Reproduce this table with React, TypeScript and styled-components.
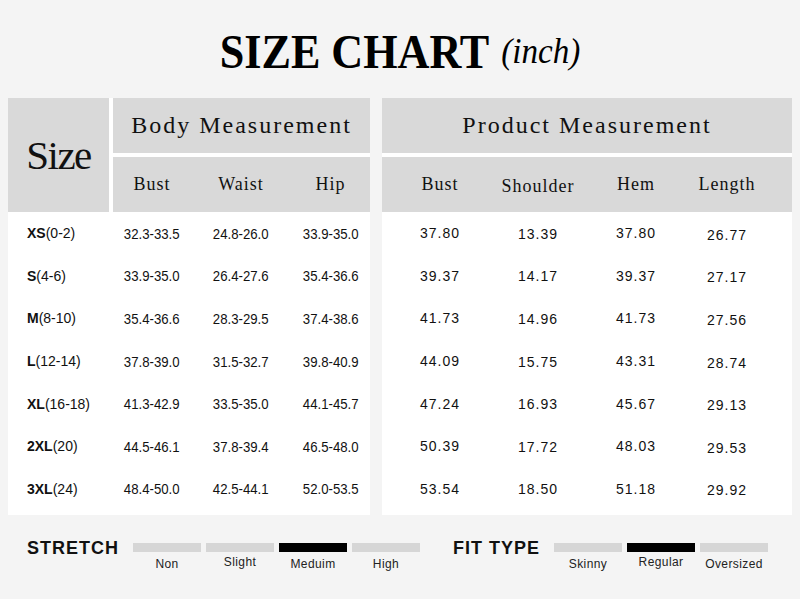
import styled, { createGlobalStyle } from "styled-components";

const GlobalStyle = createGlobalStyle`
  html, body {
    margin: 0;
    padding: 0;
    background: #f4f4f4;
  }
  body {
    width: 800px;
    height: 599px;
    overflow: hidden;
    font-family: "Liberation Sans", Arial, sans-serif;
    color: #111;
  }
`;

const Page = styled.div`
  width: 800px;
  height: 599px;
  background: #f4f4f4;
  display: flex;
  flex-direction: column;
`;

const TitleBar = styled.div`
  height: 98px;
  box-sizing: border-box;
  padding-top: 27px;
  text-align: center;
`;

const Title = styled.h1`
  display: inline-block;
  margin: 0;
  white-space: nowrap;
  font-family: "Liberation Serif", "Times New Roman", serif;
  font-weight: 700;
  font-size: 48px;
  line-height: 48px;
  color: #000;
  transform: scaleX(0.92);
`;

const Unit = styled.span`
  margin-left: 13px;
  font-weight: 400;
  font-style: italic;
  font-size: 36px;
  vertical-align: 5px;
`;

const Tables = styled.div`
  display: flex;
  gap: 12px;
  padding: 0 8px;
`;

const Panel = styled.div<{ $w: number }>`
  width: ${({ $w }) => $w}px;
  background: #fff;
  padding-bottom: 5px;
`;

const LeftHead = styled.div`
  display: grid;
  grid-template-columns: 101px 257px;
  grid-template-rows: 55px 55px;
  gap: 4px;
`;

const RightHead = styled.div`
  display: grid;
  grid-template-rows: 55px 55px;
  gap: 4px;
`;

const GrayCell = styled.div<{ $tall?: boolean }>`
  background: #d9d9d9;
  display: flex;
  align-items: center;
  justify-content: center;
  font-family: "Liberation Serif", "Times New Roman", serif;
  color: #111;
  grid-row: ${({ $tall }) => ($tall ? "1 / 3" : "auto")};
`;

const SizeWord = styled.span`
  font-size: 41px;
  letter-spacing: -1.5px;
`;

const GroupTitle = styled.span`
  font-size: 24px;
  letter-spacing: 2px;
`;

const SubRow = styled.div<{ $cols: string; $pad?: number }>`
  background: #d9d9d9;
  display: grid;
  grid-template-columns: ${({ $cols }) => $cols};
  padding-left: ${({ $pad }) => $pad ?? 0}px;
  align-items: center;
  font-family: "Liberation Serif", "Times New Roman", serif;
  font-size: 18px;
  letter-spacing: 1px;
  color: #111;
`;

const SubName = styled.div<{ $dy?: number }>`
  text-align: center;
  padding-top: ${({ $dy }) => $dy ?? 0}px;
`;

const Row = styled.div<{ $cols: string; $pad?: number }>`
  display: grid;
  grid-template-columns: ${({ $cols }) => $cols};
  padding-left: ${({ $pad }) => $pad ?? 0}px;
  height: 42.6px;
  align-items: center;
  font-size: 14px;
  color: #111;
`;

const SizeLabel = styled.div`
  padding-left: 19px;
  white-space: nowrap;
  b {
    font-weight: 700;
  }
`;

const Range = styled.div`
  text-align: center;
`;

const Narrow = styled.span`
  display: inline-block;
  font-size: 15px;
  transform: scaleX(0.88);
  white-space: nowrap;
`;

const Value = styled.div<{ $dy?: number }>`
  text-align: center;
  letter-spacing: 1px;
  padding-top: ${({ $dy }) => $dy ?? 0}px;
`;

const Footer = styled.div`
  display: flex;
  gap: 33px;
  padding: 23px 0 0 27px;
`;

const Scale = styled.div`
  display: flex;
  align-items: flex-start;
`;

const ScaleName = styled.div`
  font-size: 18px;
  font-weight: 700;
  line-height: 20px;
  letter-spacing: 1px;
  margin-right: 14px;
  color: #111;
`;

const Steps = styled.div`
  display: flex;
  gap: 5px;
  margin-top: 5px;
`;

const Step = styled.div`
  width: 68px;
  display: flex;
  flex-direction: column;
  align-items: center;
`;

const Bar = styled.div<{ $on: boolean }>`
  width: 100%;
  height: 9px;
  background: ${({ $on }) => ($on ? "#000" : "#d6d6d6")};
`;

const StepLabel = styled.span<{ $lift?: boolean }>`
  margin-top: ${({ $lift }) => ($lift ? 3 : 5)}px;
  font-size: 12px;
  line-height: 14px;
  letter-spacing: 0.4px;
  color: #222;
`;

const body = [
  ["XS", "(0-2)", "32.3-33.5", "24.8-26.0", "33.9-35.0"],
  ["S", "(4-6)", "33.9-35.0", "26.4-27.6", "35.4-36.6"],
  ["M", "(8-10)", "35.4-36.6", "28.3-29.5", "37.4-38.6"],
  ["L", "(12-14)", "37.8-39.0", "31.5-32.7", "39.8-40.9"],
  ["XL", "(16-18)", "41.3-42.9", "33.5-35.0", "44.1-45.7"],
  ["2XL", "(20)", "44.5-46.1", "37.8-39.4", "46.5-48.0"],
  ["3XL", "(24)", "48.4-50.0", "42.5-44.1", "52.0-53.5"],
];

const product = [
  ["37.80", "13.39", "37.80", "26.77"],
  ["39.37", "14.17", "39.37", "27.17"],
  ["41.73", "14.96", "41.73", "27.56"],
  ["44.09", "15.75", "43.31", "28.74"],
  ["47.24", "16.93", "45.67", "29.13"],
  ["50.39", "17.72", "48.03", "29.53"],
  ["53.54", "18.50", "51.18", "29.92"],
];

// small vertical offsets per column, as in the original artwork
const productShift = [0, 1, 0, 3];

const stretch = [
  { name: "Non" },
  { name: "Slight", lift: true },
  { name: "Meduim", on: true },
  { name: "High" },
];

const fitType = [
  { name: "Skinny" },
  { name: "Regular", on: true, lift: true },
  { name: "Oversized" },
];

const LEFT_COLS = "105px 78px 100px 79px";
const RIGHT_COLS = "98px 98px 98px 84px";

type StepItem = { name: string; on?: boolean; lift?: boolean };

function ScaleBlock({ title, items }: { title: string; items: StepItem[] }) {
  return (
    <Scale>
      <ScaleName>{title}</ScaleName>
      <Steps>
        {items.map((s) => (
          <Step key={s.name}>
            <Bar $on={!!s.on} />
            <StepLabel $lift={s.lift}>{s.name}</StepLabel>
          </Step>
        ))}
      </Steps>
    </Scale>
  );
}

export default function App() {
  return (
    <Page>
      <GlobalStyle />
      <TitleBar>
        <Title>
          SIZE CHART<Unit>(inch)</Unit>
        </Title>
      </TitleBar>

      <Tables>
        <Panel $w={362}>
          <LeftHead>
            <GrayCell $tall>
              <SizeWord>Size</SizeWord>
            </GrayCell>
            <GrayCell>
              <GroupTitle>Body Measurement</GroupTitle>
            </GrayCell>
            <SubRow $cols="78px 100px 79px">
              <SubName>Bust</SubName>
              <SubName>Waist</SubName>
              <SubName>Hip</SubName>
            </SubRow>
          </LeftHead>
          {body.map(([size, range, bust, waist, hip]) => (
            <Row key={size} $cols={LEFT_COLS}>
              <SizeLabel>
                <b>{size}</b>
                {range}
              </SizeLabel>
              <Range>
                <Narrow>{bust}</Narrow>
              </Range>
              <Range>
                <Narrow>{waist}</Narrow>
              </Range>
              <Range>
                <Narrow>{hip}</Narrow>
              </Range>
            </Row>
          ))}
        </Panel>

        <Panel $w={410}>
          <RightHead>
            <GrayCell>
              <GroupTitle>Product Measurement</GroupTitle>
            </GrayCell>
            <SubRow $cols={RIGHT_COLS} $pad={9}>
              <SubName>Bust</SubName>
              <SubName $dy={3}>Shoulder</SubName>
              <SubName>Hem</SubName>
              <SubName>Length</SubName>
            </SubRow>
          </RightHead>
          {product.map((vals, i) => (
            <Row key={i} $cols={RIGHT_COLS} $pad={9}>
              {vals.map((v, j) => (
                <Value key={j} $dy={productShift[j]}>
                  {v}
                </Value>
              ))}
            </Row>
          ))}
        </Panel>
      </Tables>

      <Footer>
        <ScaleBlock title="STRETCH" items={stretch} />
        <ScaleBlock title="FIT TYPE" items={fitType} />
      </Footer>
    </Page>
  );
}
